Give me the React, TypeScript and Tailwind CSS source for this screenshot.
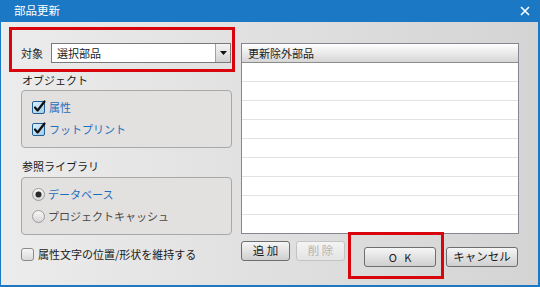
import React from 'react';

const FONT = { fontFamily: '"Meiryo UI", "Noto Sans CJK JP", "Noto Sans", sans-serif' };

const CheckedBox: React.FC = () => (
  <svg width="14" height="14" viewBox="0 0 14 14" className="shrink-0">
    <defs>
      <linearGradient id="cbFill" x1="0" y1="0" x2="1" y2="1">
        <stop offset="0" stopColor="#e3f1fb" />
        <stop offset="1" stopColor="#9ccbee" />
      </linearGradient>
    </defs>
    <rect x="0.5" y="1.5" width="12" height="12" rx="1.5" fill="url(#cbFill)" stroke="#1f5f94" />
    <path d="M3 7.5 L5.6 10.5 L12.5 1.5" fill="none" stroke="#111" strokeWidth="2.2" strokeLinecap="round" strokeLinejoin="round" />
  </svg>
);

const EmptyBox: React.FC = () => (
  <svg width="13" height="13" viewBox="0 0 13 13" className="shrink-0">
    <defs>
      <linearGradient id="ebFill" x1="0" y1="0" x2="0" y2="1">
        <stop offset="0" stopColor="#f7f7f7" />
        <stop offset="1" stopColor="#d8d8d8" />
      </linearGradient>
    </defs>
    <rect x="0.5" y="0.5" width="12" height="12" rx="2.5" fill="url(#ebFill)" stroke="#8a8a8a" />
  </svg>
);

const Radio: React.FC<{ on?: boolean }> = ({ on }) => (
  <svg width="13" height="13" viewBox="0 0 13 13" className="shrink-0">
    <defs>
      <linearGradient id="rdFill" x1="0" y1="0" x2="0" y2="1">
        <stop offset="0" stopColor="#f8f8f8" />
        <stop offset="1" stopColor="#d6d6d6" />
      </linearGradient>
    </defs>
    <circle cx="6.5" cy="6.5" r="6" fill="url(#rdFill)" stroke="#9a9a9a" />
    {on && <circle cx="6.5" cy="6.5" r="3" fill="#2a2a2a" />}
  </svg>
);

const Button: React.FC<{ label: string; disabled?: boolean; className?: string }> = ({ label, disabled, className }) => (
  <div
    className={`flex h-[20px] items-center justify-center whitespace-pre rounded-[3px] border ${
      disabled
        ? 'border-[#c4c4c4] bg-linear-to-b from-[#f4f4f4] to-[#e4e4e4] text-[#b4b4b4]'
        : 'border-[#6e6e6e] bg-linear-to-b from-[#f6f6f6] to-[#cfcfcf] text-[#1a1a1a]'
    } ${className ?? ''}`}
  >
    {label}
  </div>
);

export default function App() {
  const rows = Array.from({ length: 9 });
  return (
    <div className="flex h-[287px] w-[540px] flex-col overflow-hidden" style={FONT}>
      {/* Title bar */}
      <div className="flex h-[22px] shrink-0 items-center justify-between bg-[#1a78c4] pl-[14px] pr-[10px] text-[11.5px] text-white">
        <span>部品更新</span>
        <svg width="10" height="10" viewBox="0 0 10 10">
          <path d="M1 1 L9 9 M9 1 L1 9" stroke="#fff" strokeWidth="1.6" />
        </svg>
      </div>

      {/* Body */}
      <div className="flex flex-1 border-b-2 border-l border-r-2 border-[#1a78c4] bg-linear-to-r from-[#ececec] to-[#d4d4d4] text-[11px] text-[#1a1a1a]">
        {/* Left column */}
        <div className="ml-[8px] mt-[5px] flex w-[226px] flex-col">
          <div className="flex h-[45px] border-[3px] border-[#d8050c]">
            <div className="mt-[13px] flex h-[20px] items-center">
              <span className="ml-[9px] w-[30px]">対象</span>
              <div className="flex h-[20px] w-[180px] items-center border border-[#7a7a7a] bg-white">
                <span className="flex-1 pl-[5px] leading-none">選択部品</span>
                <div className="flex h-full w-[15px] items-center justify-center border-l border-[#a0a0a0] bg-linear-to-b from-[#f4f4f4] to-[#d2d2d2]">
                  <svg width="7" height="4" viewBox="0 0 7 4">
                    <path d="M0 0 L7 0 L3.5 4 Z" fill="#111" />
                  </svg>
                </div>
              </div>
            </div>
          </div>

          <div className="ml-[13px] mt-[1px] h-[14px] leading-[14px]">オブジェクト</div>
          <div className="ml-[12px] mt-[3px] flex h-[58px] w-[211px] flex-col gap-[8px] rounded-[4px] border border-[#a8a8a8] bg-[#e3e0e0] pl-[10px] pt-[9px]">
            <div className="flex h-[14px] items-center gap-[3px] text-[#1d6fbd]">
              <CheckedBox />
              <span>属性</span>
            </div>
            <div className="flex h-[14px] items-center gap-[3px] text-[#1d6fbd]">
              <CheckedBox />
              <span>フットプリント</span>
            </div>
          </div>

          <div className="ml-[13px] mt-[11px] h-[14px] leading-[14px]">参照ライブラリ</div>
          <div className="ml-[12px] mt-[4px] flex h-[58px] w-[211px] flex-col gap-[8px] rounded-[4px] border border-[#a8a8a8] bg-[#e3e0e0] pl-[10px] pt-[9px]">
            <div className="flex h-[14px] items-center gap-[3px] text-[#1d6fbd]">
              <Radio on />
              <span>データベース</span>
            </div>
            <div className="flex h-[14px] items-center gap-[3px] text-[#4a4a4a]">
              <Radio />
              <span>プロジェクトキャッシュ</span>
            </div>
          </div>

          <div className="ml-[12px] mt-[12px] flex h-[14px] items-center gap-[4px]">
            <EmptyBox />
            <span>属性文字の位置/形状を維持する</span>
          </div>
        </div>

        {/* Right column */}
        <div className="ml-[6px] mt-[21px] flex w-[278px] flex-col">
          <div className="flex h-[191px] flex-col overflow-hidden border border-[#828790] bg-white">
            <div className="flex h-[19px] shrink-0 items-center border-b border-[#8c8c8c] bg-linear-to-b from-[#ffffff] to-[#d6d6d6] pl-[6px]">
              更新除外部品
            </div>
            {rows.map((_, i) => (
              <div key={i} className="h-[19px] shrink-0 border-b border-[#e2e2e2]" />
            ))}
          </div>

          <div className="flex items-start">
            <Button label="追 加" className="mt-[7px] w-[49px] text-[11.5px]" />
            <Button label="削 除" disabled className="ml-[6px] mt-[7px] w-[49px] text-[11.5px]" />
            <div className="relative -mt-[2px] ml-[3px] h-[47px] w-[96px] border-[3px] border-[#d8050c] pl-[13px] pt-[12px]">
              <Button label="O   K" className="w-[72px] text-[11px]" />
            </div>
            <Button label="キャンセル" className="ml-[2px] mt-[13px] w-[72px] text-[11.5px]" />
          </div>
        </div>
      </div>
    </div>
  );
}
